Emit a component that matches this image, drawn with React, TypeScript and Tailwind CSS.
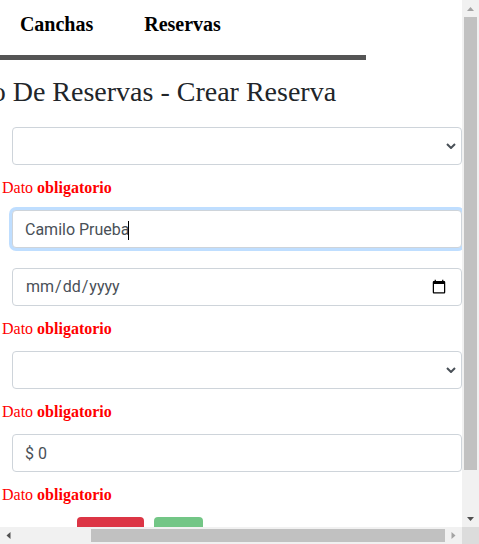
import { useEffect, useRef } from "react";

const field =
  "block h-[38px] w-[450px] rounded border border-solid border-[#ced4da] bg-white px-3 text-[16px] text-[#495057] font-['Roboto',sans-serif] outline-none";

function Chevron() {
  return (
    <svg
      className="pointer-events-none absolute right-[6px] top-[16px]"
      width="10"
      height="6"
      viewBox="0 0 10 6"
      fill="none"
    >
      <path d="M1 1l4 4 4-4" stroke="#495057" strokeWidth="2" />
    </svg>
  );
}

function Error() {
  return (
    <p className="ml-[99px] mt-[14px] mb-[13px] text-[16px] leading-[18px] text-[#ff0000]">
      Dato <b>obligatorio</b>
    </p>
  );
}

// small triangle used for the scrollbar buttons
function Arrow({ d, color }: { d: string; color: string }) {
  return (
    <svg width="17" height="17" viewBox="0 0 17 17" className="shrink-0">
      <path d={d} fill={color} />
    </svg>
  );
}

export default function App() {
  const viewport = useRef<HTMLDivElement>(null);

  useEffect(() => {
    const el = viewport.current;
    if (el) el.scrollLeft = el.scrollWidth - el.clientWidth;
  }, []);

  return (
    <div className="flex h-[544px] w-[479px] flex-col bg-white font-['Liberation_Serif',serif]">
      <div className="flex h-[527px]">
        <div ref={viewport} className="w-[462px] overflow-hidden">
          <div className="w-[559px] pb-[26px]">
            <nav className="flex w-[463px] gap-[51px] border-b-[5px] border-[#555555] pt-[13px] pb-[19px] pl-[17px] text-[20px] leading-[23px] font-bold text-black">
              <a href="#">Inicio</a>
              <a href="#">Canchas</a>
              <a href="#">Reservas</a>
            </nav>

            <h1 className="mt-[16px] pl-[14px] text-[28px] leading-[32px] text-[#212529]">
              Modulo De Reservas - Crear Reserva
            </h1>

            <form className="mt-[19px] flex flex-col">
              <div className="relative ml-[109px] w-[450px]">
                <select className={`${field} appearance-none`} defaultValue="">
                  <option value=""></option>
                </select>
                <Chevron />
              </div>
              <Error />

              <div className="relative mb-[20px] ml-[109px] w-[450px]">
                <input
                  className={`${field} border-[#80bdff] caret-transparent shadow-[0_0_0_3px_rgba(0,123,255,0.25)]`}
                  defaultValue="Camilo Prueba"
                />
                <span className="absolute left-[116px] top-[11px] h-[19px] w-px bg-black" />
              </div>

              <input type="date" className={`${field} ml-[109px]`} />
              <Error />

              <div className="relative ml-[109px] w-[450px]">
                <select className={`${field} appearance-none`} defaultValue="">
                  <option value=""></option>
                </select>
                <Chevron />
              </div>
              <Error />

              <input className={`${field} ml-[109px]`} defaultValue="$ 0" />
              <Error />

              <div className="ml-[174px] flex gap-[10px] font-['Roboto',sans-serif] text-[14px] text-white">
                <button type="button" className="h-[38px] w-[67px] rounded bg-[#dc3545]">
                  Cancelar
                </button>
                <button type="button" disabled className="h-[38px] w-[49px] rounded bg-[#28a745] opacity-65">
                  Crear
                </button>
              </div>
            </form>
          </div>
        </div>

        <div className="flex w-[17px] flex-col bg-[#f1f1f1]">
          <Arrow d="M5 11h7L8.5 7z" color="#a3a3a3" />
          <div className="mx-[2px] h-[453px] bg-[#c1c1c1]" />
          <div className="flex-1" />
          <Arrow d="M5 7h7l-3.5 4z" color="#505050" />
        </div>
      </div>

      <div className="flex h-[17px]">
        <div className="flex w-[462px] items-center bg-[#f1f1f1]">
          <Arrow d="M10.5 5v7L6.5 8.5z" color="#505050" />
          <div className="flex flex-1 items-center">
            <div className="ml-[74px] h-[13px] flex-1 bg-[#c1c1c1]" />
          </div>
          <Arrow d="M6.5 5v7l4-3.5z" color="#a3a3a3" />
        </div>
        <div className="w-[17px] bg-[#dcdcdc]" />
      </div>
    </div>
  );
}
